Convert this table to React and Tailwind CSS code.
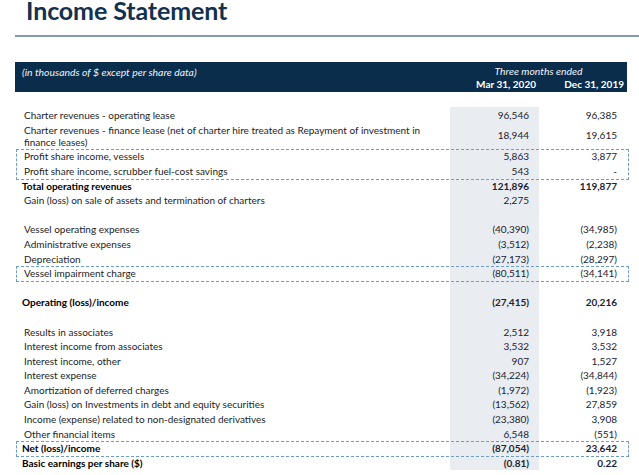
import React from 'react'

const ROW = 'h-[14.6px] leading-[14.6px]'

const Row = ({ label, a, b, bold, first, wrap }) => {
  const h = first ? 'h-[15.6px] leading-[15.6px] pt-[1px]' : ROW
  return (
    <div className="grid grid-cols-[435px_89px_88px]">
      {wrap ? (
        <div className="h-[26.8px] pl-[9px] pr-[14px] pt-[1px] leading-[12.7px] text-[#1d1d1d]">{label}</div>
      ) : (
        <div className={`${h} ${bold ? 'pl-[7px] font-bold text-black' : 'pl-[9px] text-[#1d1d1d]'} whitespace-nowrap`}>
          {label}
        </div>
      )}
      <div
        className={`bg-[#e9ecf0] text-right pr-[10px] text-[#1c2333] ${bold ? 'font-bold' : ''} ${
          wrap ? 'h-[26.8px] flex items-center justify-end' : h
        }`}
      >
        {a}
      </div>
      <div
        className={`text-right pr-[10px] text-[#1c2333] ${bold ? 'font-bold' : ''} ${
          wrap ? 'h-[26.8px] flex items-center justify-end' : h
        }`}
      >
        {b}
      </div>
    </div>
  )
}

const Dashed = ({ children }) => (
  <div className="relative">
    {children}
    <span className="absolute left-[1px] -right-[2px] top-0 -bottom-[1px] border border-dashed border-[#6d9cc4] pointer-events-none"></span>
  </div>
)

const Blank = () => <Row label="" a="" b="" />

export default function App() {
  return (
    <div className="w-[639px] h-[475px] bg-white overflow-hidden font-['Lato','Open_Sans',sans-serif] text-[10px]">
      <div className="pl-[26px] h-[35px] text-[25px] leading-[20px] font-bold text-[#14304f] tracking-[-0.1px]">
        Income Statement
      </div>
      <div className="ml-[15px] h-[2px] bg-[#8797ae]"></div>
      <div className="h-[25px]"></div>

      <div className="ml-[15px] w-[612px] h-[30px] bg-[#0b2d4c] grid grid-cols-[435px_89px_88px] grid-rows-[15px_15px] text-[10px] text-[#eef2f7]">
        <div className="row-span-2 pl-[7px] pt-[3px] italic text-[10.4px]">(in thousands of $ except per share data)</div>
        <div className="col-span-2 text-center pt-[3px] italic text-[10.4px] leading-[12px]">Three months ended</div>
        <div className="text-right pr-[3px] font-bold leading-[15px] text-white">Mar 31, 2020</div>
        <div className="text-right pr-[3px] font-bold leading-[15px] text-white">Dec 31, 2019</div>
      </div>

      <div className="ml-[15px] w-[612px] pt-[15px]">
        <Row first label="Charter revenues - operating lease" a="96,546" b="96,385" />
        <Row
          wrap
          label="Charter revenues - finance lease (net of charter hire treated as Repayment of investment in finance leases)"
          a="18,944"
          b="19,615"
        />
        <Dashed>
          <Row label="Profit share income, vessels" a="5,863" b="3,877" />
          <Row label="Profit share income, scrubber fuel-cost savings" a="543" b="-" />
        </Dashed>
        <Row bold label="Total operating revenues" a="121,896" b="119,877" />
        <Row label="Gain (loss) on sale of assets and termination of charters" a="2,275" b="" />
        <Blank />
        <Row label="Vessel operating expenses" a="(40,390)" b="(34,985)" />
        <Row label="Administrative expenses" a="(3,512)" b="(2,238)" />
        <Row label="Depreciation" a="(27,173)" b="(28,297)" />
        <Dashed>
          <Row label="Vessel impairment charge" a="(80,511)" b="(34,141)" />
        </Dashed>
        <Blank />
        <Row bold label="Operating (loss)/income" a="(27,415)" b="20,216" />
        <Blank />
        <Row label="Results in associates" a="2,512" b="3,918" />
        <Row label="Interest income from associates" a="3,532" b="3,532" />
        <Row label="Interest income, other" a="907" b="1,527" />
        <Row label="Interest expense" a="(34,224)" b="(34,844)" />
        <Row label="Amortization of deferred charges" a="(1,972)" b="(1,923)" />
        <Row label="Gain (loss) on Investments in debt and equity securities" a="(13,562)" b="27,859" />
        <Row label="Income (expense) related to non-designated derivatives" a="(23,380)" b="3,908" />
        <Row label="Other financial items" a="6,548" b="(551)" />
        <Dashed>
          <Row bold label="Net (loss)/income" a="(87,054)" b="23,642" />
        </Dashed>
        <Row bold label="Basic earnings per share ($)" a="(0.81)" b="0.22" />
      </div>
    </div>
  )
}
